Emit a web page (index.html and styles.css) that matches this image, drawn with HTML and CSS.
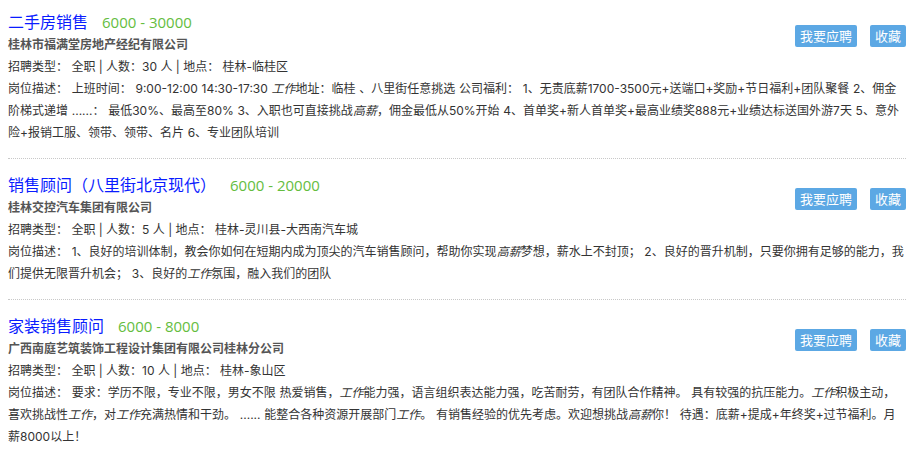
FILE: index.html
```html
<!DOCTYPE html>
<html lang="zh-CN">

<head>
    <meta charset="UTF-8">
    <meta name="viewport" content="width=device-width, initial-scale=1.0">
    <title>职位列表</title>
    <link rel="stylesheet" href="styles.css">
</head>

<body>
    <div class="jobList">
        <div class="job">
            <div class="jobHead">
                <div class="jobMain">
                    <div class="jobTitle">
                        <a href="#" class="jobName">二手房销售</a>
                        <span class="salary">6000 - 30000</span>
                    </div>
                    <div class="company">桂林市福满堂房地产经纪有限公司</div>
                </div>
                <div class="jobBtns">
                    <a href="#" class="btn">我要应聘</a>
                    <a href="#" class="btn">收藏</a>
                </div>
            </div>
            <div class="jobInfo">招聘类型： 全职 | 人数：30 人 | 地点： 桂林-临桂区</div>
            <div class="jobDesc">岗位描述： 上班时间： 9:00-12:00 14:30-17:30 <em>工作</em>地址：临桂 、八里街任意挑选 公司福利： 1、无责底薪1700-3500元+送端口+奖励+节日福利+团队聚餐 2、佣金阶梯式递增 ......： 最低30%、最高至80% 3、入职也可直接挑战<em>高薪</em>，佣金最低从50%开始 4、首单奖+新人首单奖+最高业绩奖888元+业绩达标送国外游7天 5、意外险+报销工服、领带、领带、名片 6、专业团队培训</div>
        </div>

        <div class="job">
            <div class="jobHead">
                <div class="jobMain">
                    <div class="jobTitle">
                        <a href="#" class="jobName">销售顾问（八里街北京现代）</a>
                        <span class="salary">6000 - 20000</span>
                    </div>
                    <div class="company">桂林交控汽车集团有限公司</div>
                </div>
                <div class="jobBtns">
                    <a href="#" class="btn">我要应聘</a>
                    <a href="#" class="btn">收藏</a>
                </div>
            </div>
            <div class="jobInfo">招聘类型： 全职 | 人数：5 人 | 地点： 桂林-灵川县-大西南汽车城</div>
            <div class="jobDesc">岗位描述： 1、良好的培训体制，教会你如何在短期内成为顶尖的汽车销售顾问，帮助你实现<em>高薪</em>梦想，薪水上不封顶； 2、良好的晋升机制，只要你拥有足够的能力，我们提供无限晋升机会； 3、良好的<em>工作</em>氛围，融入我们的团队</div>
        </div>

        <div class="job">
            <div class="jobHead">
                <div class="jobMain">
                    <div class="jobTitle">
                        <a href="#" class="jobName">家装销售顾问</a>
                        <span class="salary">6000 - 8000</span>
                    </div>
                    <div class="company">广西南庭艺筑装饰工程设计集团有限公司桂林分公司</div>
                </div>
                <div class="jobBtns">
                    <a href="#" class="btn">我要应聘</a>
                    <a href="#" class="btn">收藏</a>
                </div>
            </div>
            <div class="jobInfo">招聘类型： 全职 | 人数：10 人 | 地点： 桂林-象山区</div>
            <div class="jobDesc">岗位描述： 要求：学历不限，专业不限，男女不限 热爱销售，<em>工作</em>能力强，语言组织表达能力强，吃苦耐劳，有团队合作精神。 具有较强的抗压能力。<em>工作</em>积极主动，喜欢挑战性<em>工作</em>，对<em>工作</em>充满热情和干劲。 ...... 能整合各种资源开展部门<em>工作</em>。 有销售经验的优先考虑。欢迎想挑战<em>高薪</em>你！ 待遇：底薪+提成+年终奖+过节福利。月薪8000以上！</div>
        </div>
    </div>
</body>

</html>
```

FILE: styles.css
```css
body {
    margin: 0;
    padding: 0;
    background-color: #fff;
    color: #333;
    font-family: Inter, "Noto Sans CJK SC", sans-serif;
    font-size: 12px;
}

.jobList {
    padding: 0 8px;
}

.job {
    padding: 14px 0;
    border-bottom: 1px dotted #c8c8c8;
}

.job:first-child {
    padding-top: 10px;
}

.jobHead {
    display: flex;
    align-items: center;
}

.jobMain {
    flex: 1;
}

.jobTitle {
    height: 24px;
    line-height: 24px;
    display: flex;
    align-items: center;
    gap: 14px;
}

.jobName {
    font-size: 16px;
    color: #0a1cff;
    text-decoration: none;
}

.salary {
    font-family: "Open Sans", sans-serif;
    font-size: 15px;
    color: #64bd3e;
}

.company {
    line-height: 22px;
    font-weight: bold;
    color: #555;
}

.jobBtns {
    display: flex;
    gap: 13px;
    margin-top: 6px;
}

.btn {
    display: block;
    height: 22px;
    line-height: 22px;
    padding: 0 5px;
    border-radius: 2px;
    background-color: #5ca8e4;
    color: #fff;
    font-size: 13px;
    text-decoration: none;
}

.jobInfo,
.jobDesc {
    line-height: 22px;
}

.jobDesc {
    word-spacing: 0.35px;
}

.jobDesc em {
    font-style: italic;
}
```
